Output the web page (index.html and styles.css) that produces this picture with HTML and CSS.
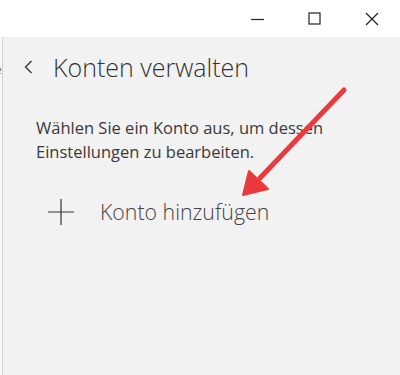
FILE: index.html
```html
<!DOCTYPE html>
<html lang="de">
<head>
  <meta charset="UTF-8" />
  <title>Konten verwalten</title>
  <link rel="stylesheet" href="styles.css">
</head>
<body>

  <div class="titlebar">
    <span class="ctl">
      <svg width="14" height="14" viewBox="0 0 14 14"><path d="M0 7.5h13" stroke="#222" stroke-width="1.2"/></svg>
    </span>
    <span class="ctl">
      <svg width="14" height="14" viewBox="0 0 14 14"><rect x="1" y="1" width="11" height="11" fill="none" stroke="#222" stroke-width="1.2"/></svg>
    </span>
    <span class="ctl">
      <svg width="14" height="14" viewBox="0 0 14 14"><path d="M1 1l12 12M13 1L1 13" stroke="#222" stroke-width="1.2"/></svg>
    </span>
  </div>

  <div class="main">
    <div class="edge"><span class="stub">e</span></div>
    <div class="panel">
      <div class="head">
        <svg class="back" width="10" height="14" viewBox="0 0 10 14"><path d="M7.5 1L1.5 7l6 6" fill="none" stroke="#333" stroke-width="1.3"/></svg>
        <h1>Konten verwalten</h1>
      </div>

      <p class="hint">Wählen Sie ein Konto aus, um dessen Einstellungen zu bearbeiten.</p>

      <div class="add">
        <svg width="26" height="26" viewBox="0 0 26 26"><path d="M13 0v26M0 13h26" stroke="#333" stroke-width="1.2"/></svg>
        <span>Konto hinzufügen</span>
      </div>

      <!-- annotation arrow drawn over the screenshot -->
      <svg class="arrow" width="400" height="375" viewBox="0 0 400 375">
        <line x1="344" y1="90" x2="260" y2="178" stroke="#ea3a3e" stroke-width="5" stroke-linecap="round"/>
        <polygon points="243,195 249,171 268,189" fill="#ea3a3e" stroke="#ea3a3e" stroke-width="2" stroke-linejoin="round"/>
      </svg>
    </div>
  </div>

</body>
</html>
```

FILE: styles.css
```css
body {
  margin: 0;
  font-family: "Open Sans", "Noto Sans", sans-serif;
  background: #f2f2f2;
  color: #333;
  height: 375px;
  overflow: hidden;
  display: flex;
  flex-direction: column;
}
.titlebar {
  height: 37px;
  background: #fff;
  display: flex;
  justify-content: flex-end;
  padding-right: 0;
}
.ctl {
  width: 57px;
  display: flex;
  align-items: center;
  justify-content: center;
}
.main {
  flex: 1;
  display: flex;
}
.edge {
  width: 2px;
  background: #fafafa;
  border-right: 1px solid #cfcfcf;
  position: relative;
}
.stub {
  position: absolute;
  top: 24px;
  left: -5px;
  font-size: 12px;
  color: #777;
}
.panel {
  flex: 1;
  background: #f2f2f2;
  padding: 0 0 0 21px;
  position: relative;
}
.head {
  display: flex;
  align-items: center;
  height: 60px;
}
.back {
  margin-right: 19px;
}
h1 {
  margin: 0;
  font-size: 25px;
  font-weight: 300;
  color: #333;
}
.hint {
  margin: 19px 0 0 12px;
  width: 330px;
  font-size: 16.5px;
  line-height: 24px;
  color: #3a3a3a;
}
.add {
  display: flex;
  align-items: center;
  margin: 33px 0 0 24px;
  font-size: 21.3px;
  font-weight: 300;
  color: #444;
}
.add span {
  margin-left: 26px;
}
.arrow {
  position: absolute;
  top: -37px;
  left: -3px;
  pointer-events: none;
}
```
